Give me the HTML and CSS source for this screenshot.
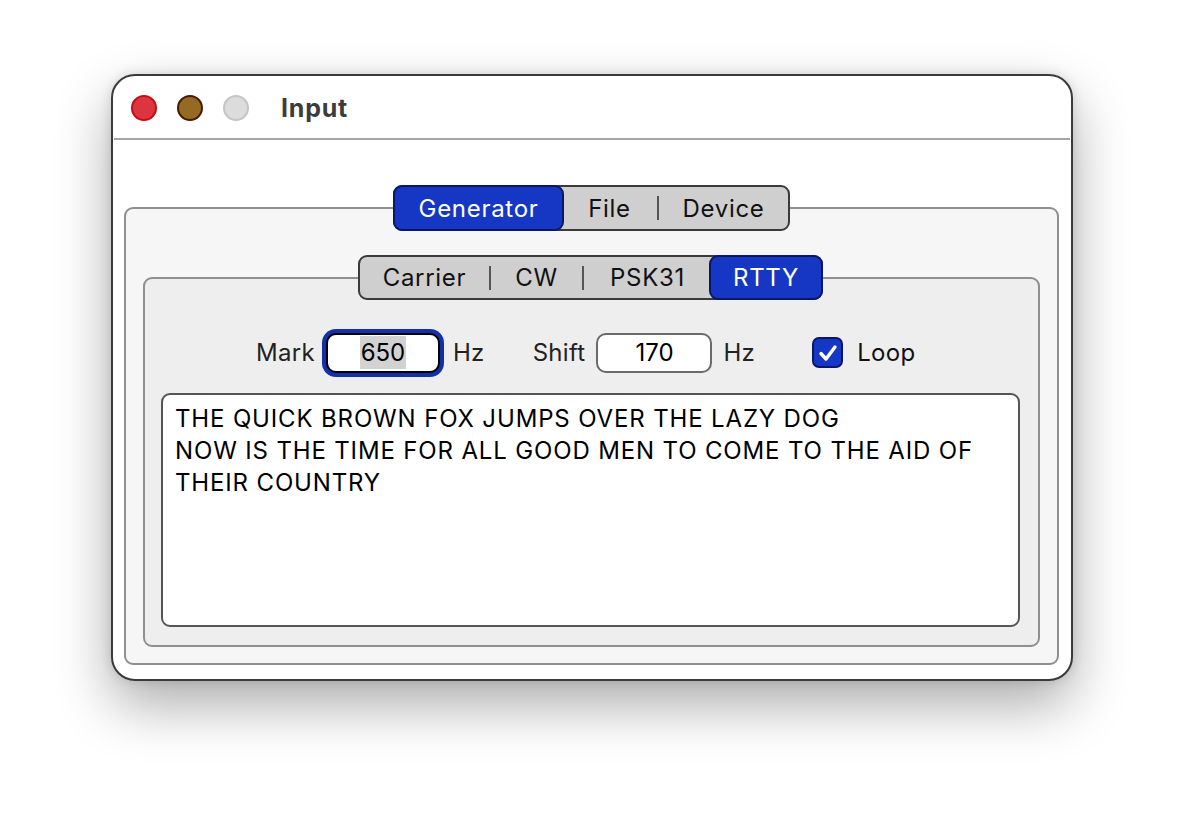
FILE: index.html
```html
<!DOCTYPE html>
<html>
<head>
<meta charset="utf-8">
<link rel="stylesheet" href="styles.css">
</head>
<body>
<div class="desk">
  <div class="window">
    <div class="titlebar">
      <span class="light red"></span>
      <span class="light yellow"></span>
      <span class="light gray"></span>
      <span class="title">Input</span>
    </div>
    <div class="separator"></div>
    <div class="content">
      <div class="group outer">
        <div class="segmented outer-tabs">
          <div class="seg selected">Generator</div>
          <div class="seg">File</div>
          <div class="div"></div>
          <div class="seg">Device</div>
        </div>
        <div class="group inner">
          <div class="segmented inner-tabs">
            <div class="seg">Carrier</div>
            <div class="div"></div>
            <div class="seg">CW</div>
            <div class="div"></div>
            <div class="seg">PSK31</div>
            <div class="seg selected">RTTY</div>
          </div>
          <div class="params">
            <span class="label">Mark</span>
            <div class="field focused"><span class="sel">650</span></div>
            <span class="unit">Hz</span>
            <span class="label shift">Shift</span>
            <div class="field">170</div>
            <span class="unit">Hz</span>
            <span class="checkbox">
              <svg width="20" height="18" viewBox="0 0 20 18"><path d="M3 9.5 L8 15 L17 3" fill="none" stroke="#fff" stroke-width="3.4" stroke-linecap="round" stroke-linejoin="round"/></svg>
            </span>
            <span class="label loop">Loop</span>
          </div>
          <div class="textbox">THE QUICK BROWN FOX JUMPS OVER THE LAZY DOG
NOW IS THE TIME FOR ALL GOOD MEN TO COME TO THE AID OF THEIR COUNTRY</div>
        </div>
      </div>
    </div>
  </div>
</div>
</body>
</html>
```
FILE: styles.css
```css
* { box-sizing: border-box; }
html, body { margin: 0; padding: 0; background: #ffffff; }
body {
  width: 1184px;
  height: 828px;
  overflow: hidden;
  font-family: Inter, "Liberation Sans", sans-serif;
}
.desk { padding: 74px 0 0 111px; }
.window {
  width: 962px;
  height: 607px;
  background: #ffffff;
  border: 2px solid #3a3a3a;
  border-radius: 24px;
  box-shadow: 0 24px 56px rgba(0,0,0,0.33), 0 0 12px rgba(0,0,0,0.12);
  display: flex;
  flex-direction: column;
}
.titlebar {
  height: 62px;
  display: flex;
  align-items: center;
  padding-left: 18px;
  padding-top: 2px;
}
.light {
  width: 26px;
  height: 26px;
  border-radius: 50%;
  margin-right: 20px;
  border: 2px solid;
}
.light.red { background: #dd3540; border-color: #c70a14; }
.light.yellow { background: #956a24; border-color: #4a1a00; }
.light.gray { background: #dcdcdc; border-color: #c4c4c4; margin-right: 32px; }
.title {
  font-size: 25px;
  font-weight: 700;
  color: #3c3c3c;
  letter-spacing: 0.8px;
}
.separator {
  height: 2px;
  background: #a5a5a5;
  margin: 0 1px;
}
.content {
  flex: 1;
  padding: 67px 12px 14px 11px;
  display: flex;
  flex-direction: column;
}
.group {
  border: 2px solid #8f8f8f;
  border-radius: 9px;
  display: flex;
  flex-direction: column;
  align-items: center;
}
.group.outer {
  flex: 1;
  background: #f6f6f6;
  padding: 0 17px 16px 17px;
}
.group.inner {
  flex: 1;
  align-self: stretch;
  background: #eeeeee;
  margin-top: 46px;
  padding: 0 18px 18px 16px;
}
.segmented {
  display: flex;
  align-items: center;
  margin-top: -24px;
  background: #cfcfcf;
  border: 2px solid #3a3a3a;
  border-radius: 9px;
  font-size: 24px;
  color: #111111;
}
.outer-tabs { height: 46px; }
.inner-tabs { height: 45px; }
.seg {
  height: 100%;
  display: flex;
  align-items: center;
  justify-content: center;
  padding: 0 20px;
  letter-spacing: 0.7px;
}
.seg.selected {
  background: #1537c4;
  color: #ffffff;
  border: 2px solid #0a1766;
  border-radius: 9px;
  margin: -2px;
  height: calc(100% + 4px);
}
.div {
  width: 2px;
  height: 24px;
  background: #555555;
}
.outer-tabs .seg:nth-child(1) { width: 171px; }
.outer-tabs .seg:nth-child(2) { width: 95px; }
.outer-tabs .seg:nth-child(4) { width: 129px; }
.inner-tabs .seg:nth-child(1) { width: 129px; }
.inner-tabs .seg:nth-child(3) { width: 91px; }
.inner-tabs .seg:nth-child(5) { width: 127px; }
.inner-tabs .seg:nth-child(6) { width: 114px; }
.params {
  display: flex;
  align-items: center;
  align-self: stretch;
  height: 47px;
  margin-top: 29px;
  padding-left: 95px;
  font-size: 24px;
  color: #222222;
}
.label, .unit { letter-spacing: 0.3px; }
.field {
  width: 116px;
  height: 40px;
  border: 2px solid #6a6a6a;
  border-radius: 10px;
  background: #ffffff;
  display: flex;
  align-items: center;
  justify-content: center;
  color: #000000;
  margin: 0 11px 0 11px;
}
.field.focused {
  width: 114px;
  border-color: #000000;
  box-shadow: 0 0 0 4px #1430a8;
  margin: 0 13px 0 11px;
}
.sel {
  background: #d2d2d2;
  padding: 2px 1px;
}
.shift { margin-left: 48px; }
.checkbox {
  width: 31px;
  height: 31px;
  border-radius: 7px;
  background: #1637c4;
  border: 2px solid #0a1766;
  display: flex;
  align-items: center;
  justify-content: center;
  margin: 0 14px 0 57px;
}
.loop { color: #111111; }
.textbox {
  align-self: stretch;
  flex: 1;
  margin-top: 17px;
  background: #ffffff;
  border: 2px solid #555555;
  border-radius: 9px;
  padding: 8px 30px 0 12px;
  font-size: 24px;
  letter-spacing: 0.85px;
  line-height: 32px;
  color: #000000;
  white-space: pre-wrap;
}
```
